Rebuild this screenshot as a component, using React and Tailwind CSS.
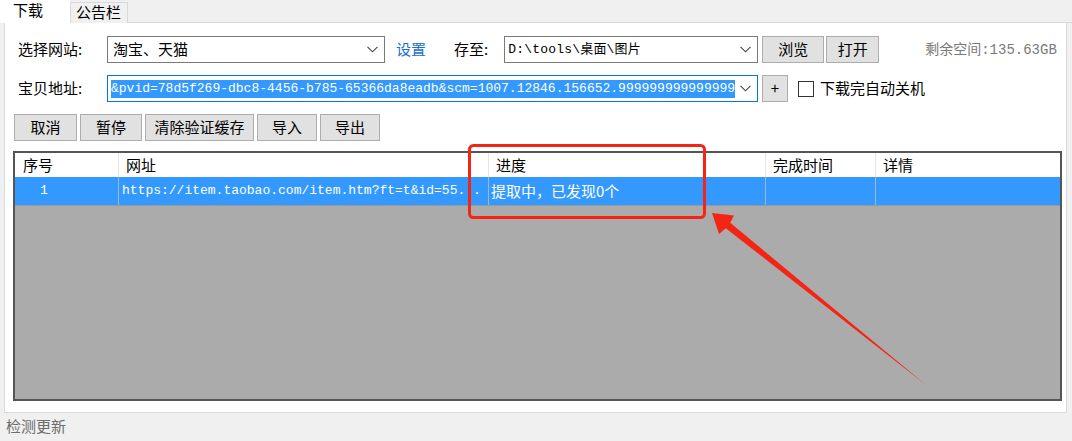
import React from 'react'

const CN = { fontFamily: '"Noto Sans CJK SC", "Microsoft YaHei", sans-serif' }
const MONO = { fontFamily: '"Liberation Mono", "Noto Sans CJK SC", monospace' }

function Chevron() {
  return (
    <svg width="11" height="7" viewBox="0 0 11 7" className="shrink-0">
      <path d="M0.5 0.8 L5.5 5.8 L10.5 0.8" fill="none" stroke="#444" strokeWidth="1.1" />
    </svg>
  )
}

function Btn({ w, children }) {
  return (
    <div className={`h-[27px] ${w} flex items-center justify-center bg-[#e1e1e1] border border-[#adadad] text-[15px] text-black`}>
      {children}
    </div>
  )
}

const COLS = [
  { key: 'no', label: '序号', w: 'w-[103px]' },
  { key: 'url', label: '网址', w: 'w-[370px]' },
  { key: 'prog', label: '进度', w: 'w-[277px]' },
  { key: 'time', label: '完成时间', w: 'w-[110px]' },
  { key: 'info', label: '详情', w: 'flex-1' },
]

export default function App() {
  return (
    <div className="relative w-[1072px] h-[441px] bg-[#f0f0f0] overflow-hidden text-black" style={CN}>
      {/* 标签页 */}
      <div className="flex h-[23px] items-end">
        <div className="w-[70px] h-[23px] bg-white flex items-start pl-[13px] text-[15px] leading-[19px]">下载</div>
        <div className="w-[58px] h-[21px] border border-b-0 border-[#d9d9d9] flex items-start pl-[5px] text-[15px] leading-[18px]">公告栏</div>
        <div className="flex-1 h-px bg-[#d9d9d9]" />
      </div>

      {/* 面板 */}
      <div className="ml-[4px] w-[1063px] h-[390px] bg-white border border-t-0 border-[#d9d9d9] pl-[8px] pt-[13px]">
        {/* 第一行 */}
        <div className="flex items-center h-[27px]">
          <div className="w-[94px] pl-[5px] text-[15px]">选择网站:</div>
          <div className="w-[278px] h-[27px] border border-[#7a7a7a] flex items-center pl-[5px] pr-[6px] justify-between text-[15px]">
            <span>淘宝、天猫</span>
            <Chevron />
          </div>
          <div className="ml-[11px] text-[15px] text-[#1a6fd0]">设置</div>
          <div className="ml-[28px] text-[15px]">存至:</div>
          <div className="ml-[16px] w-[254px] h-[27px] border border-[#7a7a7a] flex items-center pl-[3px] pr-[6px] justify-between">
            <span className="text-[13px] tracking-[0.2px]" style={MONO}>D:\tools\桌面\图片</span>
            <Chevron />
          </div>
          <div className="ml-[4px]"><Btn w="w-[62px]">浏览</Btn></div>
          <div className="ml-[2px]"><Btn w="w-[53px]">打开</Btn></div>
          <div className="ml-[46px] text-[14px] text-[#7a7a7a] whitespace-nowrap">
            剩余空间<span style={MONO} className="text-[14px]">:135.63GB</span>
          </div>
        </div>

        {/* 第二行 */}
        <div className="flex items-center h-[27px] mt-[12px]">
          <div className="w-[94px] pl-[5px] text-[15px]">宝贝地址:</div>
          <div className="w-[651px] h-[27px] border border-[#0078d7] flex items-center pl-[3px] pr-[6px] justify-between overflow-hidden">
            <span className="bg-[#3399ff] text-white text-[13px] leading-[18px] whitespace-nowrap overflow-hidden w-[624px]" style={MONO}>
              &amp;pvid=78d5f269-dbc8-4456-b785-65366da8eadb&amp;scm=1007.12846.156652.999999999999999
            </span>
            <Chevron />
          </div>
          <div className="ml-[4px]"><Btn w="w-[26px]">+</Btn></div>
          <div className="ml-[10px] w-[16px] h-[16px] border border-[#333] bg-white" />
          <div className="ml-[6px] text-[15px]">下载完自动关机</div>
        </div>

        {/* 第三行 按钮 */}
        <div className="flex items-center mt-[12px] ml-[1px] gap-[3px]">
          <Btn w="w-[63px]">取消</Btn>
          <Btn w="w-[62px]">暂停</Btn>
          <Btn w="w-[109px]">清除验证缓存</Btn>
          <Btn w="w-[60px]">导入</Btn>
          <Btn w="w-[60px]">导出</Btn>
        </div>

        {/* 表格 */}
        <div className="mt-[10px] w-[1049px] h-[250px] border-2 border-[#555] bg-[#ababab] flex flex-col">
          <div className="flex h-[24px] bg-white">
            {COLS.map((c, i) => (
              <div key={c.key} className={`${c.w} h-full flex items-center text-[15px] ${i > 0 ? 'border-l border-[#e5e5e5] pl-[7px]' : 'pl-[8px]'}`}>
                {c.label}
              </div>
            ))}
          </div>
          <div className="flex h-[29px] bg-[#3399ff] border-b border-[#9a9a9a] text-white">
            <div className="w-[103px] flex items-center pl-[25px] text-[13px]" style={MONO}>1</div>
            <div className="w-[370px] flex items-center pl-[3px] border-l border-[#9fb6cc] text-[13px] whitespace-nowrap overflow-hidden" style={MONO}>
              https://item.taobao.com/item.htm?ft=t&amp;id=55...
            </div>
            <div className="w-[277px] flex items-center pl-[2px] border-l border-[#9fb6cc] text-[15px]">提取中，已发现0个</div>
            <div className="w-[110px] border-l border-[#9fb6cc]" />
            <div className="flex-1 border-l border-[#9fb6cc]" />
          </div>
        </div>
      </div>

      {/* 状态栏 */}
      <div className="pl-[6px] pt-[2px] text-[15px] text-[#6d6d6d]">检测更新</div>

      {/* 红色标注 */}
      <svg className="absolute left-0 top-0 pointer-events-none" width="1072" height="441">
        <rect x="469.5" y="145.5" width="235" height="72" rx="4" fill="none" stroke="#f52516" strokeWidth="3" />
        <polygon points="712,213 734,215.5 730.2,222.8 926,385 725.8,228.2 719,234" fill="#f52516" />
      </svg>
    </div>
  )
}
